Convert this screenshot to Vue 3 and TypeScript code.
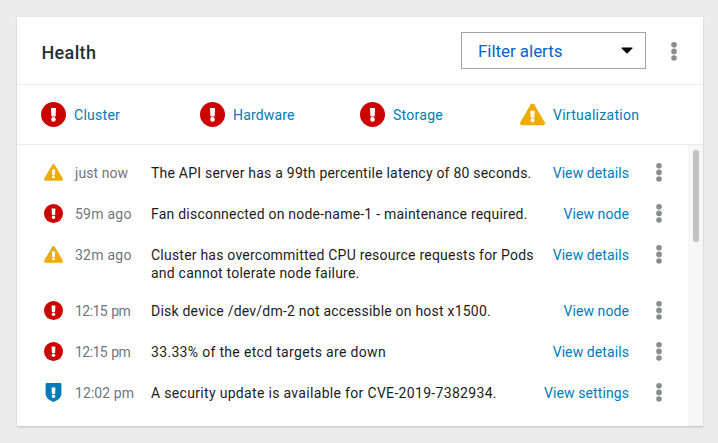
<script setup lang="ts">
import { h, type FunctionalComponent } from 'vue'

type Status = 'critical' | 'warning' | 'security'

interface Category {
  id: string
  label: string
  status: Status
}

interface Alert {
  id: number
  status: Status
  time: string
  message: string[]
  action: string
  fit?: string
}

const categories: Category[] = [
  { id: 'cluster', label: 'Cluster', status: 'critical' },
  { id: 'hardware', label: 'Hardware', status: 'critical' },
  { id: 'storage', label: 'Storage', status: 'critical' },
  { id: 'virtualization', label: 'Virtualization', status: 'warning' },
]

const alerts: Alert[] = [
  { id: 1, status: 'warning', time: 'just now', message: ['The API server has a 99th percentile latency of 80 seconds.'], action: 'View details' },
  { id: 2, status: 'critical', time: '59m ago', message: ['Fan disconnected on node-name-1 - maintenance required.'], action: 'View node', fit: 'loose-time' },
  { id: 3, status: 'warning', time: '32m ago', message: ['Cluster has overcommitted CPU resource requests for Pods', 'and cannot tolerate node failure.'], action: 'View details', fit: 'loose-time' },
  { id: 4, status: 'critical', time: '12:15 pm', message: ['Disk device /dev/dm-2 not accessible on host x1500.'], action: 'View node', fit: 'tight-time' },
  { id: 5, status: 'critical', time: '12:15 pm', message: ['33.33% of the etcd targets are down'], action: 'View details', fit: 'tight-time loose-message' },
  { id: 6, status: 'security', time: '12:02 pm', message: ['A security update is available for CVE-2019-7382934.'], action: 'View settings', fit: 'loose-message' },
]

const StatusIcon: FunctionalComponent<{ status: Status }> = (props) => {
  const bang = (transform?: string) =>
    h('g', { fill: '#fff', transform }, [
      h('path', { d: 'M9.9 5.7h4.2q.3 0 .3.3l-.35 7.5q0 .4-.4.4h-3.3q-.4 0-.4-.4L9.6 6q0-.3.3-.3z' }),
      h('circle', { cx: 12, cy: 16.7, r: 2.2 }),
    ])
  if (props.status === 'critical') {
    return h('svg', { viewBox: '0 0 24 24' }, [h('circle', { cx: 12, cy: 12, r: 12, fill: '#c00' }), bang()])
  }
  if (props.status === 'warning') {
    return h('svg', { viewBox: '0 0 24 24' }, [
      h('path', { fill: '#f0ab00', d: 'M10.4 2.2a1.9 1.9 0 0 1 3.2 0l10.1 17.300a1.900 1.900 0 0 1-1.600 2.800H1.900a1.900 1.900 0 0 1-1.600-2.800z' }),
      bang('translate(1.56 3.5) scale(.87 .84)'),
    ])
  }
  return h('svg', { viewBox: '0 0 24 24' }, [
    h('path', { fill: '#007bba', d: 'M3.2 0h17.600q1.200 0 1.200 1.200V13c0 5.500-4.500 9-10 11C6.500 22 2 18.500 2 13V1.200Q2 0 3.200 0z' }),
    bang(),
  ])
}

const Kebab: FunctionalComponent = () =>
  h('svg', { viewBox: '0 0 6 20' }, [2.8, 9.4, 16].map((cy) => h('circle', { cx: 3, cy, r: 2.8, fill: '#8a8d90' })))
</script>

<template>
  <main class="page">
    <section class="card">
      <header class="head">
        <h1>Health</h1>
        <button class="filter" type="button">
          <span>Filter alerts</span>
          <svg class="caret" viewBox="0 0 12 7"><path d="M1 .5h10q1 0 .3.900L6.800 6.100q-.8.800-1.600 0L.7 1.400Q0 .5 1 .5z" /></svg>
        </button>
        <Kebab class="kebab" />
      </header>
      <nav class="categories">
        <a v-for="c in categories" :key="c.id" :class="['category', c.id]">
          <StatusIcon class="big-icon" :status="c.status" />
          <span>{{ c.label }}</span>
        </a>
      </nav>
      <div class="body">
        <ul class="alerts">
          <li v-for="a in alerts" :key="a.id" :class="['alert', a.fit]">
            <StatusIcon class="icon" :status="a.status" />
            <time>{{ a.time }}</time>
            <p><span v-for="line in a.message" :key="line">{{ line }}</span></p>
            <a class="action">{{ a.action }}</a>
            <Kebab class="kebab" />
          </li>
        </ul>
        <div class="track"><div class="thumb"></div></div>
      </div>
    </section>
  </main>
</template>

<style>
body {
  background: #ececec;
}
</style>

<style scoped>
.page {
  box-sizing: border-box;
  width: 718px;
  height: 443px;
  padding: 17px 15px 0 17px;
  overflow: hidden;
  background: #ececec;
  font: 14px/18px Roboto, 'Noto Sans', sans-serif;
  color: #1c1c1c;
}
.card {
  display: flex;
  flex-direction: column;
  height: 409px;
  background: #fff;
  box-shadow: 0 1px 2px rgba(3, 3, 3, 0.2);
}
.head {
  box-sizing: border-box;
  display: flex;
  align-items: center;
  height: 68px;
  padding: 0 26px 0 24.5px;
  border-bottom: 1px solid #ededed;
}
h1 {
  flex: 1;
  margin: 5px 0 0;
  font-size: 18px;
  font-weight: 500;
  line-height: 24px;
  letter-spacing: 0.35px;
  color: #292e34;
}
.filter {
  box-sizing: border-box;
  display: flex;
  align-items: center;
  justify-content: space-between;
  width: 185px;
  height: 37px;
  margin-right: 25px;
  padding: 0 12px 0 16px;
  border: 1px solid #a3a3a3;
  background: #fff;
  font: 17px/22px Roboto, 'Noto Sans', sans-serif;
  letter-spacing: -0.05px;
  color: #06c;
}
.caret {
  width: 12px;
  height: 7px;
}
.kebab {
  display: block;
  flex: none;
  width: 6px;
  height: 20px;
}
.head .kebab {
  margin-top: 2px;
}
.categories {
  box-sizing: border-box;
  display: grid;
  grid-template-columns: 159px 160px 160px 1fr;
  align-items: center;
  height: 60px;
  padding: 0 0 0 24px;
  border-bottom: 1px solid #ededed;
}
.category {
  display: flex;
  align-items: center;
  gap: 8px;
  color: #007bba;
  letter-spacing: 0.27px;
}
.hardware {
  letter-spacing: 0.17px;
}
.big-icon {
  flex: none;
  width: 25px;
  height: 25px;
}
.body {
  display: flex;
  flex: 1;
}
.alerts {
  flex: 1;
  display: flex;
  flex-direction: column;
  gap: 19px;
  margin: 0;
  padding: 18px 26px 0 27px;
  list-style: none;
}
.alert {
  display: grid;
  grid-template-columns: 31px 76px 1fr auto 6px;
  height: 22px;
  white-space: nowrap;
}
.alert:nth-child(3) {
  height: 37px;
}
.icon {
  width: 19px;
  height: 19px;
}
time,
p,
.action {
  padding-top: 1px;
}
time {
  color: #72767b;
  letter-spacing: 0.07px;
}
.loose-time time {
  letter-spacing: 0.25px;
}
.tight-time time {
  letter-spacing: -0.55px;
  word-spacing: 1.2px;
}
p {
  margin: 0;
  letter-spacing: 0.22px;
}
.loose-message p {
  letter-spacing: 0.32px;
}
p span {
  display: block;
}
.action {
  margin-right: 27px;
  color: #007bba;
  letter-spacing: 0.09px;
}
.track {
  box-sizing: border-box;
  width: 15px;
  padding: 5px 4px 0 5px;
  background: #f6f6f6;
}
.thumb {
  height: 92px;
  border-radius: 3px;
  background: #c1c1c1;
}
</style>
